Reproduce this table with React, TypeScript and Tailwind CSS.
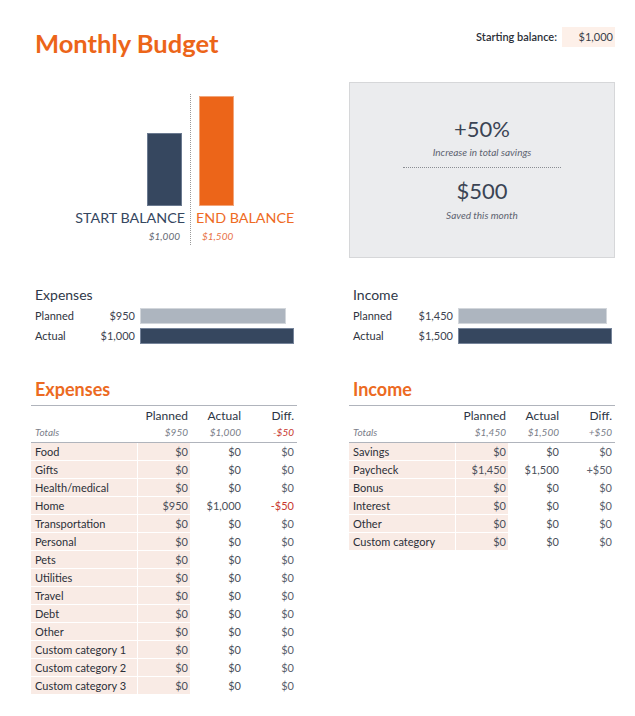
import React from 'react';

type Row = { name: string; planned: string; actual: string; diff: string; neg?: boolean };

const expenseRows: Row[] = [
  { name: 'Food', planned: '$0', actual: '$0', diff: '$0' },
  { name: 'Gifts', planned: '$0', actual: '$0', diff: '$0' },
  { name: 'Health/medical', planned: '$0', actual: '$0', diff: '$0' },
  { name: 'Home', planned: '$950', actual: '$1,000', diff: '-$50', neg: true },
  { name: 'Transportation', planned: '$0', actual: '$0', diff: '$0' },
  { name: 'Personal', planned: '$0', actual: '$0', diff: '$0' },
  { name: 'Pets', planned: '$0', actual: '$0', diff: '$0' },
  { name: 'Utilities', planned: '$0', actual: '$0', diff: '$0' },
  { name: 'Travel', planned: '$0', actual: '$0', diff: '$0' },
  { name: 'Debt', planned: '$0', actual: '$0', diff: '$0' },
  { name: 'Other', planned: '$0', actual: '$0', diff: '$0' },
  { name: 'Custom category 1', planned: '$0', actual: '$0', diff: '$0' },
  { name: 'Custom category 2', planned: '$0', actual: '$0', diff: '$0' },
  { name: 'Custom category 3', planned: '$0', actual: '$0', diff: '$0' },
];

const incomeRows: Row[] = [
  { name: 'Savings', planned: '$0', actual: '$0', diff: '$0' },
  { name: 'Paycheck', planned: '$1,450', actual: '$1,500', diff: '+$50' },
  { name: 'Bonus', planned: '$0', actual: '$0', diff: '$0' },
  { name: 'Interest', planned: '$0', actual: '$0', diff: '$0' },
  { name: 'Other', planned: '$0', actual: '$0', diff: '$0' },
  { name: 'Custom category', planned: '$0', actual: '$0', diff: '$0' },
];

const BAR_MAX = 154;

const Summary = ({ title, planned, actual }: { title: string; planned: number; actual: number }) => {
  const max = Math.max(planned, actual);
  const fmt = (n: number) => '$' + n.toLocaleString('en-US');
  const rows = [
    { label: 'Planned', value: planned, bar: 'bg-[#adb5bf] border-[#d2d6db]' },
    { label: 'Actual', value: actual, bar: 'bg-[#36475f] border-[#76849a]' },
  ];

  return (
    <div className="flex flex-col">
      <div className="pl-[4px] text-[14px] leading-[18px] text-[#2f3848]">{title}</div>
      <div className="mt-[4px] flex flex-col gap-y-[4px]">
        {rows.map((r) => (
          <div key={r.label} className="flex h-[16px] items-center text-[11px] text-[#2f3440]">
            <div className="flex w-[109px] pr-[5px]">
              <span className="flex-1 pl-[4px]">{r.label}</span>
              <span className="text-[#3d4350]">{fmt(r.value)}</span>
            </div>
            <div
              className={`h-[16px] border ${r.bar}`}
              style={{ width: Math.round((r.value / max) * BAR_MAX) }}
            />
          </div>
        ))}
      </div>
    </div>
  );
};

const BudgetTable = ({
  title,
  totals,
  rows,
}: {
  title: string;
  totals: { planned: string; actual: string; diff: string; neg?: boolean };
  rows: Row[];
}) => (
  <div className="flex flex-col">
    <div className="pl-[4px] text-[18px] font-bold leading-[22px] text-[#ec6a22]">{title}</div>

    <div className="mt-[5px] border-t border-b border-[#b0b4bc]">
      <div className="grid h-[18px] grid-cols-[107px_52px_53px_54px] pt-[2px] text-[12px] leading-[16px] text-[#2c3444]">
        <span />
        <span className="pr-[2px] text-right">Planned</span>
        <span className="pr-[2px] text-right">Actual</span>
        <span className="pr-[3px] text-right">Diff.</span>
      </div>
      <div className="grid h-[18px] grid-cols-[107px_52px_53px_54px] text-[10px] italic leading-[16px] text-[#7b808a]">
        <span className="pl-[4px]">Totals</span>
        <span className="pr-[2px] text-right">{totals.planned}</span>
        <span className="pr-[2px] text-right">{totals.actual}</span>
        <span className={`pr-[3px] text-right ${totals.neg ? 'text-[#c8372d]' : ''}`}>{totals.diff}</span>
      </div>
    </div>

    <div className="flex flex-col">
      {rows.map((r) => (
        <div
          key={r.name}
          className="grid h-[18px] grid-cols-[107px_52px_53px_54px] border-b border-white text-[11px] leading-[17px]"
        >
          <span className="border-r border-white bg-[#f9ebe5] pl-[4px] text-[#2b2f38]">{r.name}</span>
          <span className="bg-[#f9ebe5] pr-[2px] text-right text-[#4a4f5a]">{r.planned}</span>
          <span className="pr-[2px] text-right text-[#4a4f5a]">{r.actual}</span>
          <span className={`pr-[3px] text-right ${r.neg ? 'text-[#c8372d]' : 'text-[#5a606c]'}`}>{r.diff}</span>
        </div>
      ))}
    </div>
  </div>
);

const App = () => {
  const start = 1000;
  const end = 1500;
  const chartMax = 110;

  return (
    <div
      className="min-h-[716px] w-[635px] bg-white pl-[31px] pt-[27px]"
      style={{ fontFamily: 'Lato, "Noto Sans", sans-serif' }}
    >
      <div className="flex w-[584px] flex-col">
        {/* header */}
        <div className="flex items-start justify-between">
          <h1 className="mt-[1px] pl-[4px] text-[25.5px] font-bold leading-[30px] text-[#ec6519]">Monthly Budget</h1>
          <div className="flex items-center gap-x-[5px] text-[11px]">
            <span className="font-semibold text-[#2b2f38]">Starting balance:</span>
            <span className="flex h-[20px] w-[53px] items-center justify-end bg-[#fdf0e9] pr-[2px] text-[#3a3f4a]">
              $1,000
            </span>
          </div>
        </div>

        {/* chart + savings */}
        <div className="mt-[24px] flex items-start gap-x-[52px]">
          <div className="w-[266px]">
            <div className="mt-[12px] flex whitespace-nowrap">
              <div className="flex w-[159px] flex-col items-end pr-[5px]">
                <div className="flex h-[112px] items-end">
                  <div
                    className="mr-[3px] w-[35px] border border-[#6b7a90] bg-[#36475f]"
                    style={{ height: Math.round((start / end) * chartMax) }}
                  />
                </div>
                <div className="mt-[3px] text-[14.3px] leading-[18px] text-[#36475f]">START BALANCE</div>
                <div className="mr-[5px] mt-[2px] text-[10px] italic leading-[14px] text-[#666b75]">$1,000</div>
              </div>
              <div className="flex flex-col border-l border-dotted border-[#9a9a9a] pb-[2px] pl-[5px]">
                <div className="flex h-[112px] items-end">
                  <div
                    className="ml-[3px] w-[35px] border border-[#f2a57a] bg-[#ec6519]"
                    style={{ height: chartMax }}
                  />
                </div>
                <div className="mt-[3px] text-[14.3px] leading-[18px] text-[#ee6a24]">END BALANCE</div>
                <div className="ml-[6px] mt-[2px] text-[10px] italic leading-[14px] text-[#e8734a]">$1,500</div>
              </div>
            </div>
          </div>

          <div className="flex h-[176px] w-[266px] flex-col items-center border border-[#d6d7d9] bg-[#ebecee] pt-[33px] text-[#3b4454]">
            <div className="text-[22px] leading-[26px]">+50%</div>
            <div className="mt-[3px] text-[10px] italic leading-[14px] text-[#5d6370]">Increase in total savings</div>
            <div className="mt-[8px] w-[158px] border-t border-dotted border-[#8a8d93]" />
            <div className="mt-[10px] text-[22px] leading-[26px]">$500</div>
            <div className="mt-[4px] text-[10px] italic leading-[14px] text-[#5d6370]">Saved this month</div>
          </div>
        </div>

        {/* summaries */}
        <div className="mt-[28px] flex gap-x-[52px]">
          <div className="w-[266px]">
            <Summary title="Expenses" planned={950} actual={1000} />
          </div>
          <div className="w-[266px]">
            <Summary title="Income" planned={1450} actual={1500} />
          </div>
        </div>

        {/* tables */}
        <div className="mt-[34px] flex items-start gap-x-[52px]">
          <div className="w-[266px]">
            <BudgetTable
              title="Expenses"
              totals={{ planned: '$950', actual: '$1,000', diff: '-$50', neg: true }}
              rows={expenseRows}
            />
          </div>
          <div className="w-[266px]">
            <BudgetTable
              title="Income"
              totals={{ planned: '$1,450', actual: '$1,500', diff: '+$50' }}
              rows={incomeRows}
            />
          </div>
        </div>
      </div>
    </div>
  );
};

export default App;
